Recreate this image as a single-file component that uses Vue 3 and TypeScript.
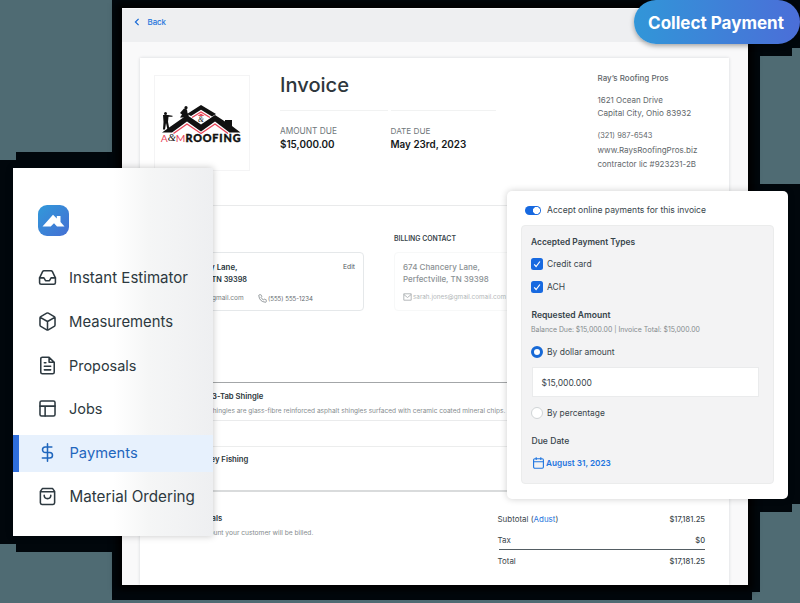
<script setup lang="ts">
import { ref } from 'vue'

interface NavItem { id: string; label: string; cls: string }

const nav: NavItem[] = [
  { id: 'estimator', label: 'Instant Estimator', cls: 'n-estimator' },
  { id: 'measurements', label: 'Measurements', cls: 'n-measure' },
  { id: 'proposals', label: 'Proposals', cls: 'n-proposals' },
  { id: 'jobs', label: 'Jobs', cls: 'n-jobs' },
  { id: 'payments', label: 'Payments', cls: 'n-payments' },
  { id: 'ordering', label: 'Material Ordering', cls: 'n-ordering' },
]
const active = ref('payments')
const methods = ['Credit card', 'ACH']
</script>

<template>
  <div class="stage">
    <svg class="backdrop" viewBox="0 0 800 603" width="800" height="603">
      <rect width="800" height="603" fill="#4f6b73" />
      <path fill="#01070c" d="M112 0H800V48H792V56H760V184H800V504H792V512H760V592H752V600H112V552H16V544H0V160H16V152H112Z" />
    </svg>

    <main class="window">
      <header class="topbar">
        <svg width="6" height="8" viewBox="0 0 6 8"><path d="M4.6 .8 1.4 4l3.2 3.2" /></svg>
        <span>Back</span>
      </header>
      <article class="paper">
        <section class="head">
          <div class="logo">
            <svg width="84" height="42" viewBox="0 0 84 42">
              <path d="M3 27.500 28 10 42 19.500 56 10 66 16.500V15h7v6l8.500 6.500H70.500L56 16.500 42 26.500 28 16.500 13 27.500Z" fill="#111" />
              <path d="M28 9 42 0 57 9l-4 2.500L42 4.800 32 11Z" fill="#111" />
              <path d="M14.500 28.500 28 19l14 9.500L56 19l13 9.500M33 12.500 42 7l9 5.500" fill="none" stroke="#e8465a" stroke-width="1.400" />
              <path d="m38.500 11 3.500-2.500 3.500 2.500z" fill="#e8465a" />
              <circle cx="6.500" cy="8.500" r="1.500" fill="#111" />
              <path d="M4 10h5l4.500.8v1H9.500l-.5 5 1.500 8H8.500L7 18l-1 6.500H4L4.500 17Z" fill="#111" />
              <circle cx="27" cy="2.700" r="1.600" fill="#111" />
              <path d="m21 8 4-4.500 3 1 .500 3.500 1.500 2.500-5 2h-4l2-3Z" fill="#111" />
            </svg>
            <i class="amp">&amp;</i>
            <div class="wordmark"><span class="r">A</span><i>&amp;</i><span class="r">M</span><b>ROOFING</b></div>
          </div>
          <div class="summary">
            <h1>Invoice</h1>
            <dl>
              <div><dt class="lab-a">AMOUNT DUE</dt><dd>$15,000.00</dd></div>
              <div><dt>DATE DUE</dt><dd>May 23rd, 2023</dd></div>
            </dl>
          </div>
          <address>
            <p class="name">Ray’s Roofing Pros</p>
            <p class="l1">1621 Ocean Drive</p>
            <p class="l2">Capital City, Ohio 83932</p>
            <p class="l3">(321) 987-6543</p>
            <p class="l4">www.RaysRoofingPros.biz</p>
            <p class="l5">contractor lic #923231-2B</p>
          </address>
        </section>

        <section class="contacts">
          <div class="card site">
            <div class="site-top"><p>y Lane,<br /><span>TN 39398</span></p><a>Edit</a></div>
            <div class="reach">
              <span>gmail.com</span>
              <svg width="9" height="9" viewBox="0 0 24 24"><path d="M22 17v3a2 2 0 0 1-2.200 2A19.800 19.800 0 0 1 2.100 4.200 2 2 0 0 1 4 2h3a2 2 0 0 1 2 1.700l1 3.300-1.800 2.500a16 16 0 0 0 6 6l2.300-1.800 3.300 1A2 2 0 0 1 22 17Z" /></svg>
              <span class="phone">(555) 555-1234</span>
            </div>
          </div>
          <div class="billing">
            <h2>BILLING CONTACT</h2>
            <div class="card pale">
              <p><span class="st">674 Chancery Lane,</span><br />Perfectville, TN 39398</p>
              <div class="reach">
                <svg width="9" height="8" viewBox="0 0 9 8"><path d="M.8.8h7.400v6.400H.8zM.8 1.500l3.700 3 3.700-3" /></svg>
                <span>sarah.jones@gmail.comail.com</span>
              </div>
            </div>
          </div>
        </section>

        <section class="line first">
          <h3 class="tab">3-Tab Shingle</h3>
          <p>Shingles are glass-fibre reinforced asphalt shingles surfaced with ceramic coated mineral chips.</p>
        </section>
        <section class="line second"><h3>ey Fishing</h3></section>

        <section class="totals">
          <div class="note"><h3>als</h3><p>ount your customer will be billed.</p></div>
          <div class="sums">
            <div class="row"><span>Subtotal (<a>Adust</a>)</span><span>$17,181.25</span></div>
            <div class="row tax"><span>Tax</span><span>$0</span></div>
            <div class="row"><span>Total</span><span>$17,181.25</span></div>
          </div>
        </section>
      </article>
    </main>

    <aside class="sidebar">
      <svg class="brand" width="31" height="31" viewBox="0 0 31 31">
        <defs><linearGradient id="bg" x1="0" y1="0" x2="1" y2="1"><stop offset="0" stop-color="#3199da" /><stop offset="1" stop-color="#456fd3" /></linearGradient></defs>
        <rect width="31" height="31" rx="9" fill="url(#bg)" />
        <path fill="#fff" d="M4.500 21.500 15 9.700l3.800 3.800V11h3.700v6l4 4.500h-7.500L16 18.300l-3.300 3.200Z" />
      </svg>
      <nav>
        <a v-for="n in nav" :key="n.id" :class="[n.cls, { active: active === n.id }]" @click="active = n.id">
          <svg width="19" height="19" viewBox="0 0 24 24">
            <g v-if="n.id === 'estimator'"><path d="M22 12.500h-5.500l-2 3.500h-5l-2-3.500H2" /><path d="M5.800 4.500 2 12.500V18.500a2 2 0 0 0 2 2h16a2 2 0 0 0 2-2v-6L18.200 4.500a2 2 0 0 0-1.700-1H7.500a2 2 0 0 0-1.700 1Z" /></g>
            <g v-else-if="n.id === 'measurements'"><path d="M21.500 16.500v-9a2 2 0 0 0-1-1.700l-7.500-4.300a2 2 0 0 0-2 0L3.500 5.800a2 2 0 0 0-1 1.700v9a2 2 0 0 0 1 1.700l7.500 4.300a2 2 0 0 0 2 0l7.500-4.300a2 2 0 0 0 1-1.700ZM2.800 6.700 12 12l9.200-5.300M12 22.500V12" /></g>
            <g v-else-if="n.id === 'proposals'"><path d="M14 1.500H5.500a2 2 0 0 0-2 2v17a2 2 0 0 0 2 2h13a2 2 0 0 0 2-2V8ZM14 1.500V8h6.500M16 13H8M16 17.500H8M10 8.500H8" /></g>
            <g v-else-if="n.id === 'jobs'"><rect x="2.500" y="2.500" width="19" height="19" rx="2" /><path d="M2.500 9h19M9 21.500V9" /></g>
            <g v-else-if="n.id === 'payments'"><path d="M12 1v22M17.500 5H9.200a3.500 3.500 0 0 0 0 7h5.600a3.500 3.500 0 0 1 0 7H5.500" /></g>
            <g v-else><path d="M5.500 2 3 5.500v14.500a2 2 0 0 0 2 2h14a2 2 0 0 0 2-2V5.500L18.500 2ZM3 6h18M16.200 10.500a4.200 4.200 0 0 1-8.400 0" /></g>
          </svg>
          <span>{{ n.label }}</span>
        </a>
      </nav>
    </aside>

    <section class="panel">
      <div class="toggle"><i class="switch"></i><span>Accept online payments for this invoice</span></div>
      <div class="box">
        <h4 class="h-types">Accepted Payment Types</h4>
        <label v-for="m in methods" :key="m" class="opt" :class="{ ach: m === 'ACH' }">
          <svg width="12" height="12" viewBox="0 0 12 12"><rect width="12" height="12" rx="2.500" fill="#1769e0" /><path d="m3.200 6.400 1.900 2.100L8.900 3.500" fill="none" stroke="#fff" stroke-width="1.200" /></svg>
          <span>{{ m }}</span>
        </label>
        <h4 class="h-req">Requested Amount</h4>
        <p class="balance">Balance Due: $15,000.00 | Invoice Total: $15,000.00</p>
        <label class="opt dollar"><i class="radio on"></i><span>By dollar amount</span></label>
        <div class="field">$15,000.000</div>
        <label class="opt percent"><i class="radio"></i><span>By percentage</span></label>
        <h4 class="h-due">Due Date</h4>
        <div class="date">
          <svg width="11" height="12" viewBox="0 0 11 12"><rect x=".6" y="1.700" width="9.800" height="9.600" rx="1.200" /><path d="M.6 4.700h9.800M3.200.3v2.600M7.800.3v2.600" /></svg>
          <span>August 31, 2023</span>
        </div>
      </div>
    </section>

    <button class="collect">Collect Payment</button>
  </div>
</template>

<style>
body { margin: 0; overflow: hidden; }
</style>

<style scoped>
* { box-sizing: border-box; }
h1, h2, h3, h4, p, dl, dt, dd { margin: 0; font-weight: 400; }
.stage { position: relative; width: 800px; height: 603px; overflow: hidden; font-family: Inter, "Liberation Sans", sans-serif; color: #2d3b42; white-space: nowrap; }
.backdrop { position: absolute; inset: 0; }

.window { position: absolute; left: 122px; top: 8px; width: 625.500px; height: 577px; background: #f9f9fa; overflow: hidden; box-shadow: 0 0 7px 5px #000; display: flex; flex-direction: column; }
.topbar { flex: none; height: 34px; padding: 0 0 7px 12px; background: #eeeff1; border-top: 1px solid #f8f8f9; display: flex; align-items: center; gap: 7.500px; color: #2474dd; font-size: 7.900px; -webkit-text-stroke: .15px; }
.topbar svg path { fill: none; stroke: #1769d6; stroke-width: 1.200; }
.paper { flex: 1; margin: 16px 18.500px 0 17.500px; background: #fff; box-shadow: 0 0 3px rgba(30, 40, 50, .16); display: flex; flex-direction: column; }

.head { height: 148px; flex: none; border-bottom: 1px solid #e9eaeb; display: flex; padding-top: 17px; }
.logo { width: 96px; height: 96px; margin-left: 14.500px; border: 1px solid #f4f4f5; position: relative; display: flex; flex-direction: column; align-items: center; padding-top: 28.500px; flex: none; }
.logo svg { flex: none; height: 42px; margin-left: -3px; }
.amp { position: absolute; left: 43px; top: 39px; font: italic 7.500px "Liberation Serif", serif; color: #111; }
.wordmark { margin-top: -15px; margin-left: -2px; display: flex; align-items: center; height: 12px; font-family: Lato, sans-serif; font-size: 10.300px; color: #111; }
.wordmark .r { color: #e8465a; }
.wordmark i { font: italic 10.500px "Liberation Serif", serif; }
.wordmark b { font-weight: 900; font-size: 10.800px; letter-spacing: .85px; -webkit-text-stroke: .4px; }
.summary { width: 347.500px; padding-left: 30px; flex: none; }
h1 { font-size: 20.100px; font-weight: 500; line-height: 20px; color: #2e373c; margin-bottom: 14.500px; }
dl { display: grid; grid-template-columns: 108px 105px; gap: 2.500px; }
dl > div { border-top: 1px solid #f1f2f2; padding-top: 14px; }
dt { font-size: 8.200px; line-height: 12px; color: #6f777b; height: 13.500px; }
.lab-a { font-size: 8.320px; }
dd { font-size: 9.900px; font-weight: 600; line-height: 13px; color: #15191b; }
address { font-style: normal; font-size: 8px; line-height: 10px; color: #5f676b; }
address p { height: 10px; }
address .name { font-weight: 500; margin: -2.500px 0 12.500px; }
address .l1 { margin-bottom: 2.500px; }
address .l2 { font-size: 8.150px; margin-bottom: 13px; }
address .l3 { font-size: 7.430px; margin-bottom: 4px; }
address .l4 { font-size: 8.060px; margin-bottom: 4px; }

.contacts { height: 176px; flex: none; display: flex; align-items: flex-start; padding-left: 14px; gap: 30px; }
.card { height: 59px; border: 1px solid #e5e8ea; border-radius: 4px; }
.site { width: 210.500px; margin-top: 46px; padding: 7.500px 8px 0 55.500px; }
.site-top { display: flex; justify-content: space-between; font-size: 7.900px; line-height: 12.500px; }
.site-top p { font-weight: 600; color: #263339; }
.site-top span { font-size: 7.300px; margin-left: 1.500px; }
.site-top a { font-size: 6.730px; color: #4d575c; }
.reach { display: flex; align-items: center; height: 10px; margin-top: 6.500px; font-size: 6.500px; color: #777e82; }
.reach svg { flex: none; }
.reach svg path { fill: none; stroke: currentColor; stroke-width: 2; }
.site .reach span:first-child { margin-left: 2px; width: 46px; }
.site .phone { font-size: 6.080px; margin-left: 1px; color: #5f686c; }
.billing { width: 210px; margin-top: 28px; }
h2 { font-size: 6.870px; font-weight: 600; line-height: 10px; height: 18px; color: #39454b; }
.pale { border-color: #f7f8f8; padding: 7.500px 8px 0; font-size: 7.950px; line-height: 12.500px; color: #8b9194; }
.pale p { font-weight: 500; }
.st { font-size: 8.020px; }
.pale .reach { font-size: 6.350px; color: #b3b7b9; margin-top: 6.500px; }
.pale .reach svg path { stroke-width: .8; stroke: #a2a7a9; }
.pale .reach span { margin-left: 1px; }

.line { flex: none; padding-left: 70px; }
h3 { font-size: 7.700px; line-height: 10px; font-weight: 600; color: #2a3439; }
.line p, .note p { font-size: 6.540px; line-height: 10px; color: #858b8e; }
.first { height: 38.500px; border-top: 1px solid #a3a6a8; border-bottom: 1px solid #eaebec; padding-top: 8.500px; }
.first h3 { margin-bottom: 4px; padding-left: 2.500px; }
.first p { margin-left: -1px; }
.second { margin-top: 25.500px; height: 45.500px; border-top: 1px solid #eceded; border-bottom: 2px solid #d9dbdc; padding-top: 8px; }
.second h3 { padding-left: 1px; }
.totals { display: flex; padding: 22.500px 24px 0 72px; }
.note h3 { margin-bottom: 4px; }
.note p { font-size: 6.650px; margin-left: -2px; }
.sums { margin-left: auto; width: 207.500px; font-size: 7.950px; color: #3b464b; }
.row { display: flex; justify-content: space-between; height: 21px; line-height: 11px; }
.row a { color: #2474dd; }
.row > span:last-child { font-size: 7.560px; font-weight: 500; }
.tax { height: 14px; }
.tax + .row { border-top: 1.500px solid #535d63; margin-left: 1px; padding-top: 6px; }
.tax + .row > span:first-child { margin-left: -1px; }

.sidebar { position: absolute; left: 13px; top: 168px; width: 200px; height: 368px; background: linear-gradient(90deg, #fff 50%, #f5f6f6 68%, #eeeff1); box-shadow: 0 0 7px rgba(0, 0, 0, .23); padding-top: 37px; }
.sidebar::before { content: ""; position: absolute; z-index: -1; left: -4px; top: -4px; width: 112px; height: 376px; box-shadow: 0 0 6px 3px #000; }
.brand { display: block; margin-left: 25px; }
nav { margin-top: 23.500px; display: flex; flex-direction: column; }
nav a { height: 37px; margin-bottom: 6.800px; display: flex; align-items: center; padding: 0 0 1px 24.800px; color: #2d3940; }
nav svg { margin-right: 12.200px; flex: none; fill: none; stroke: currentColor; stroke-width: 1.950; stroke-linejoin: round; stroke-linecap: round; }
.n-estimator { font-size: 15.050px; }
.n-measure { font-size: 14.830px; }
.n-proposals { font-size: 14.450px; }
.n-jobs { font-size: 14.500px; }
.n-payments { font-size: 14.700px; }
.n-ordering { font-size: 15.230px; }
nav a.n-estimator { padding-bottom: 1.500px; }
nav a.n-measure { padding-bottom: 0; }
nav a.n-payments, nav a.n-ordering { padding-bottom: .5px; }
nav a.active { color: #1f66bd; background: #e7f1fd; border-left: 6px solid #2f6edb; padding-left: 18.800px; }
.n-payments span, .n-ordering span { margin-left: .5px; }

.panel { position: absolute; left: 507px; top: 191px; width: 281px; height: 308px; background: #fff; border-radius: 5px; box-shadow: 0 0 7px rgba(0, 0, 0, .2); padding: 12px 14px 0; color: #39454b; }
.toggle { display: flex; align-items: center; height: 14px; font-size: 8.550px; padding-left: 3.500px; margin-bottom: 8px; }
.switch { width: 16px; height: 9px; border-radius: 5px; background: radial-gradient(circle at 11.500px 4.500px, #fff 3.300px, #1769e0 3.800px); margin-right: 6.500px; }
.box { height: 259px; background: #f3f3f4; border: 1px solid #ebecec; border-radius: 4px; padding: 9.500px 14px 0 9px; }
h4 { font-size: 8.450px; line-height: 12px; font-weight: 600; color: #36434a; }
.opt { display: flex; align-items: center; gap: 4px; height: 12px; font-size: 8.500px; }
.h-types { margin-bottom: 10.500px; }
.opt.ach { margin-top: 11px; margin-bottom: 15.500px; }
.h-req { padding-left: .5px; font-size: 8.560px; }
.balance { font-size: 6.900px; line-height: 10px; color: #858b8e; margin: 4px 0 11px; }
.radio { width: 12px; height: 12px; border-radius: 50%; border: 1px solid #d0d4d6; background: #fff; }
.radio.on { border: 3.500px solid #1769d6; }
.field { height: 30px; margin: 9.500px 0 10px 1px; border: 1px solid #eaebec; background: #fff; font-size: 8.540px; line-height: 30px; padding-left: 8.500px; }
.percent { font-size: 8.420px; }
.h-due { margin: 15.500px 0 9.500px .5px; font-size: 8.600px; font-weight: 500; }
.date { display: flex; align-items: center; gap: 2.500px; padding-left: 1.500px; font-size: 8.220px; font-weight: 600; color: #1f75df; height: 13px; }
.date svg { fill: none; stroke: currentColor; stroke-width: 1.100; }

.collect { position: absolute; left: 634px; top: 0; width: 166px; height: 44px; border: 0; border-radius: 22px; padding: 1px 2px 0 0; background: linear-gradient(90deg, #3196d8, #4b6ed8); color: #fff; font: 700 17.040px Inter, sans-serif; text-align: center; box-shadow: 0 2px 5px rgba(0, 0, 0, .35); }
</style>
